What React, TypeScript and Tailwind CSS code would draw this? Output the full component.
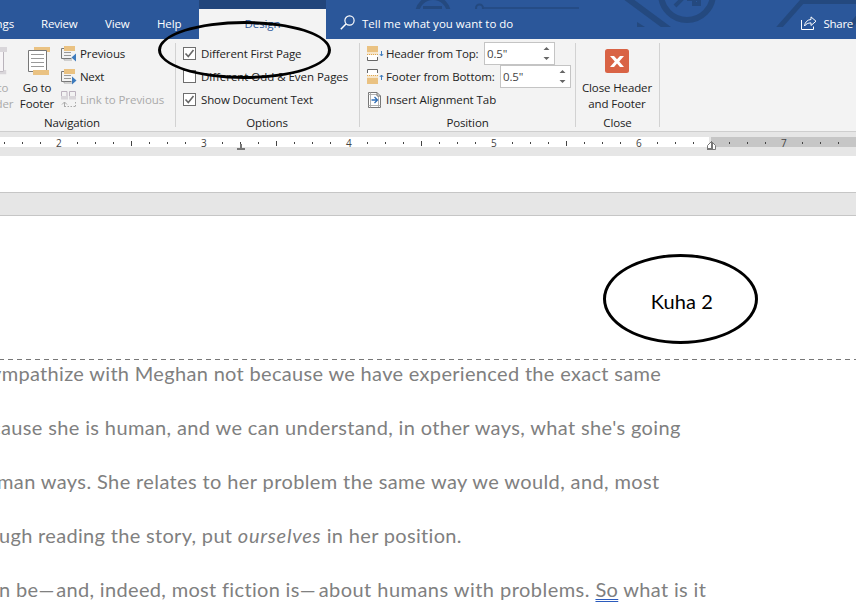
import type { ReactNode } from "react";

const UI = "font-['Open_Sans','Noto_Sans',sans-serif] text-[11.5px] tracking-[-0.12px]";

function HeaderArt() {
  return (
    <svg className="absolute left-0 top-0" width="856" height="39" fill="none" stroke="#24497f">
      <circle cx="433" cy="14" r="16" strokeWidth="4" clipPath="url(#top)" />
      <path d="M423 7.5h19" strokeWidth="3" />
      <clipPath id="top"><rect x="400" y="0" width="80" height="9" /></clipPath>
      <circle cx="479.500" cy="8" r="3.500" strokeWidth="2" clipPath="url(#top2)" />
      <clipPath id="top2"><rect x="470" y="0" width="30" height="9" /></clipPath>
      <path d="M484 8h95" strokeWidth="1.500" />
      <circle cx="687" cy="-6" r="26" strokeWidth="6" />
      <path d="M675 6L690 -9M687 -1h12V4h-5V-3" strokeWidth="4" />
      <path d="M624 -4L670 30" strokeWidth="6" clipPath="url(#band)" />
      <path d="M637 22l8 5h-8z" fill="#24497f" stroke="none" />
      <path d="M776 31L802 1.500h60M846 31L866 8" strokeWidth="5" clipPath="url(#band)" />
      <clipPath id="band"><rect x="600" y="0" width="256" height="27" /></clipPath>
    </svg>
  );
}

function SearchIcon() {
  return (
    <svg width="15" height="15" viewBox="0 0 15 15" fill="none" stroke="#fff" strokeWidth="1.2">
      <circle cx="9.500" cy="5.500" r="4.600" />
      <path d="M6.200 8.800L0.800 14.200" strokeWidth="1.500" />
    </svg>
  );
}

function ShareIcon() {
  return (
    <svg width="16" height="14" viewBox="0 0 16 14" fill="none" stroke="#fff" strokeWidth="1">
      <path d="M0.500 4v9.500h12v-3" />
      <path d="M3.500 10C4 6 6.500 3.700 10 3.500V0.900L15 5.200L10 9.500V6.900C7 6.900 5 8 3.500 10z" strokeLinejoin="round" />
    </svg>
  );
}

function GoToFooterIcon() {
  return (
    <svg width="24" height="30" viewBox="0 0 24 30" fill="none">
      <path d="M6 0h16v5h-4V3H6z" fill="#eac282" />
      <path d="M0.500 3.500h18v21h-18z" fill="#fff" stroke="#777" />
      <path d="M3 7.500h13M3 11.500h13M3 15.500h13M3 19.500h13" stroke="#999" />
      <rect x="5" y="23" width="16" height="5" fill="#eac282" />
    </svg>
  );
}

function GoToHeaderIcon() {
  return (
    <svg width="24" height="30" viewBox="0 0 24 30" fill="none">
      <path d="M0.500 3.500h20v21h-20z" fill="#f7f5f7" stroke="#b9b3bb" />
      <path d="M3 9.500h13M3 13.500h13M3 17.500h13" stroke="#c9c4cb" />
      <rect x="4" y="0" width="20" height="5" fill="#d9d6da" />
      <path d="M15 26h7v-3" stroke="#d9d6da" strokeWidth="2.500" />
    </svg>
  );
}

function StepIcon({ next = false }: { next?: boolean }) {
  return (
    <svg width="16" height="16" viewBox="0 0 16 16" fill="none">
      <path d="M3 2.500H0.500v10h10" stroke="#777" />
      <path d="M3 6.500h7M3 9.500h7" stroke="#999" />
      <path d="M3 12.500v1.500h8" stroke="#999" strokeWidth="0.800" />
      <rect x="3" y="0" width="11" height="5" fill="#eac282" />
      <path d={next ? "M11 7.500v8l4.500-4z" : "M15 7.500v8l-4.500-4z"} fill="#3e7bbd" />
    </svg>
  );
}

function LinkIcon() {
  return (
    <svg width="16" height="17" viewBox="0 0 16 17" fill="none">
      <path d="M0.500 5V0.500h5.500V5M8.500 5V0.500h6V5" stroke="#bdb3bf" />
      <path d="M0 5h7v3.500H0zM8 5h7v3.500H8z" fill="#d9d6da" />
      <path d="M3.500 11v5M1 13.500L3.500 11L6 13.500" stroke="#aaa" />
      <path d="M3.500 15.500h11M14.500 15.500v-5" stroke="#aaa" strokeDasharray="1.500 1.500" />
    </svg>
  );
}

function MarginIcon({ bottom = false }: { bottom?: boolean }) {
  return (
    <svg width="17" height="15" viewBox="0 0 17 15" fill="none">
      <g transform={bottom ? "matrix(1 0 0 -1 0 15)" : undefined}>
        <path d="M0.500 8v6.500h10V8" fill="#fff" />
        <path d="M0.500 11v3.500h10V11" stroke="#666" />
        <rect x="0" y="0" width="11" height="6" fill="#eac282" />
        <rect x="0" y="6" width="11" height="3" fill="#f6e6cc" />
        <path d="M0 8.500h11" stroke="#e0a850" strokeDasharray="1 1" />
      </g>
      <path d={bottom ? "M14.500 11V6M12.800 8l1.700-2l1.700 2" : "M14.500 5v5M12.800 8l1.700 2l1.700-2"} stroke="#3e7bbd" />
    </svg>
  );
}

function AlignTabIcon() {
  return (
    <svg width="13" height="16" viewBox="0 0 13 16" fill="none">
      <path d="M0.500 0.500H9l3.500 3.500v11.500h-12z" fill="#fff" stroke="#777" />
      <path d="M2.500 0.500v15M0.500 2.500h9M0.500 13.500h12M10.500 4v11" stroke="#aaa" strokeWidth="0.900" />
      <path d="M9 0.500V4h3.500" stroke="#777" />
      <path d="M3.500 8h5.500M6.500 5l3 3l-3 3" stroke="#2f6db5" strokeWidth="1.300" />
    </svg>
  );
}

function Divider() {
  return <div className="mt-1 h-[84px] w-px shrink-0 bg-[#d2d2d2]" />;
}

function Group({ label, className, children }: { label: string; className: string; children: ReactNode }) {
  return (
    <section className={`flex shrink-0 flex-col pt-[3px] ${className}`}>
      <div className="h-[72px]">{children}</div>
      <div className="flex h-[17px] items-center justify-center tracking-[-0.12px]">{label}</div>
    </section>
  );
}

function CheckRow({ label, checked = false }: { label: string; checked?: boolean }) {
  return (
    <div className="flex h-[23px] items-center gap-[5px]">
      <span className="h-[13px] w-[13px] border border-[#6e6e6e] bg-white">
        {checked && (
          <svg width="11" height="11" viewBox="0 0 11 11" fill="none">
            <path d="M1.500 5.500L4.300 8.500L9.500 2" stroke="#666" strokeWidth="1.600" />
          </svg>
        )}
      </span>
      <span className={checked ? "" : "tracking-[-0.04px]"}>{label}</span>
    </div>
  );
}

function Spinner() {
  return (
    <div className="flex h-[23px] w-[71px] shrink-0 items-center justify-between border border-[#c4c4c4] bg-white pl-[2px] pr-[4px] text-[#444]">
      <span>0.5"</span>
      <svg width="7" height="15" viewBox="0 0 7 15" fill="#666">
        <path d="M0.500 4L3.500 1L6.500 4zM0.500 11L3.500 14L6.500 11z" />
      </svg>
    </div>
  );
}

function Ruler() {
  return (
    <div className="relative h-[10px] bg-white">
      <div className="absolute right-0 top-0 h-[10px] w-[147px] border-l-2 border-[#e6e6e6] bg-[#c6c6c6]" />
      <div className="relative -ml-[4.5px] flex h-[10px] w-[870px]">
        {Array.from({ length: 48 }, (_, i) => {
          const k = (i + 5) % 8;
          return (
            <span key={i} className="flex w-[18.125px] shrink-0 items-center justify-center">
              {k === 0 ? (
                <span className="pt-px font-['Open_Sans',sans-serif] text-[10px] leading-[10px] text-[#444]">{(i + 13) / 8}</span>
              ) : k === 4 ? (
                <span className="mt-[3px] h-[5px] w-px bg-[#444]" />
              ) : (
                <span className="mt-[2px] h-[2px] w-px bg-[#444]" />
              )}
            </span>
          );
        })}
      </div>
      <svg className="absolute left-[237px] top-[7px]" width="8" height="6" fill="#777">
        <path d="M3 0h2v4h3v2H0V4h3z" />
      </svg>
      <svg className="absolute left-[707px] top-[4px]" width="9" height="9" fill="none">
        <path d="M0.500 8.500V4.500L4.500 0.500L8.500 4.500V8.500z" fill="#fff" stroke="#777" />
        <path d="M5 1v8M0 8h5" stroke="#777" strokeWidth="2" />
      </svg>
    </div>
  );
}

export default function App() {
  return (
    <div className="relative h-[616px] w-[856px] overflow-hidden whitespace-nowrap bg-white">
      <header className={`relative flex h-[39px] bg-[#2b579a] pt-[9px] leading-[29px] text-white ${UI}`}>
        <HeaderArt />
        <nav className="relative flex w-[199px] shrink-0">
          <span className="-ml-[10px] flex w-[24px] justify-end">ings</span>
          <span className="ml-[27px] w-[37px] tracking-[-0.2px]">Review</span>
          <span className="ml-[27px] w-[25px]">View</span>
          <span className="ml-[27px]">Help</span>
        </nav>
        <div className="relative -mt-[9px] w-[127px] shrink-0 border-t-[9px] border-[#22457b] bg-[#f3f3f3] text-center text-[#2b579a]">Design</div>
        <div className="relative ml-[14px] flex gap-[7px]">
          <span className="pt-[6px]"><SearchIcon /></span>
          <span className="tracking-normal">Tell me what you want to do</span>
        </div>
        <div className="relative ml-auto flex gap-[7px] pr-[3px]">
          <span className="pt-[7px]"><ShareIcon /></span>
          <span className="tracking-[-0.3px]">Share</span>
        </div>
      </header>

      <div className={`flex h-[93px] border-b border-[#cecece] bg-[#f3f3f3] leading-[16px] text-[#222] ${UI}`}>
        <Group label="Navigation" className="w-[175px] pr-[31px]">
          <div className="flex">
            <div className="-ml-[26px] flex w-[40px] shrink-0 flex-col items-center pt-[5px] text-[#aaa]">
              <span className="ml-[2px]"><GoToHeaderIcon /></span>
              <span className="mt-[3px]">Go to</span>
              <span>Header</span>
            </div>
            <div className="flex w-[46px] shrink-0 flex-col items-center pt-[5px]">
              <span className="ml-[6px]"><GoToFooterIcon /></span>
              <span className="mt-[3px]">Go to</span>
              <span>Footer</span>
            </div>
            <div className="ml-px">
              <div className="flex h-[23px] items-center gap-[3px]"><StepIcon /><span>Previous</span></div>
              <div className="flex h-[23px] items-center gap-[3px]"><StepIcon next /><span className="tracking-[-0.3px]">Next</span></div>
              <div className="flex h-[23px] items-center gap-[3px] text-[#aaa]"><LinkIcon /><span className="tracking-[-0.06px]">Link to Previous</span></div>
            </div>
          </div>
        </Group>
        <Divider />
        <Group label="Options" className="w-[183px] pl-[7px] pr-[8px]">
          <CheckRow label="Different First Page" checked />
          <CheckRow label="Different Odd & Even Pages" />
          <CheckRow label="Show Document Text" checked />
        </Group>
        <Divider />
        <Group label="Position" className="w-[215px] px-[4px]">
          <div className="flex h-[23px] items-center pl-[3px]">
            <MarginIcon /><span className="ml-[2px] w-[98px] shrink-0 tracking-[-0.16px]">Header from Top:</span><Spinner />
          </div>
          <div className="flex h-[23px] items-center pl-[3px]">
            <MarginIcon bottom /><span className="ml-[2px] w-[114px] shrink-0 tracking-[-0.08px]">Footer from Bottom:</span><Spinner />
          </div>
          <div className="flex h-[23px] items-center pl-[4px]">
            <AlignTabIcon /><span className="ml-[5px] tracking-[-0.06px]">Insert Alignment Tab</span>
          </div>
        </Group>
        <Divider />
        <Group label="Close" className="w-[83px]">
          <div className="-ml-px flex flex-col items-center pt-[7px]">
            <svg width="24" height="24" viewBox="0 0 24 24">
              <rect width="24" height="24" rx="2.500" fill="#d96345" />
              <path d="M5 7h4l3 3.300L15 7h4l-4.800 5.400L19 18h-4l-3-3.500L9 18H5l4.800-5.600z" fill="#fff" />
            </svg>
            <span className="mt-[7px]">Close Header</span>
            <span>and Footer</span>
          </div>
        </Group>
        <Divider />
      </div>

      <div className="h-[24px] bg-[#e6e6e6] pt-[5px]">
        <Ruler />
      </div>
      <div className="h-[36px] bg-white" />
      <div className="h-[24px] border-y border-[#c6c6c6] bg-[#e6e6e6]" />

      <main className="font-['Lato','Carlito',sans-serif] text-[20px] text-[#808080]">
        <div className="flex h-[143px] justify-end pr-[143px] pt-[58px] leading-[54px] tracking-[0.1px] text-black">
          <span>Kuha 2</span>
        </div>
        <svg className="block" width="856" height="1">
          <path d="M-1 0.500H856" stroke="#777" strokeDasharray="5 4" />
        </svg>
        <div className="-mt-[14px] leading-[54px]">
          <p className="-ml-[9px] tracking-[0.32px]">ympathize with Meghan not because we have experienced the exact same</p>
          <p className="-ml-[9px] tracking-[0.37px]">cause she is human, and we can understand, in other ways, what she's going</p>
          <p className="-ml-[3px] tracking-[0.385px]">man ways. She relates to her problem the same way we would, and, most</p>
          <p className="-ml-px tracking-[0.32px]">ugh reading the story, put <em className="tracking-[0.75px]">ourselves</em> in her position.</p>
          <p className="-ml-px tracking-[0.33px]">
            n be<span className="tracking-[2px]">—</span>and, indeed, most fiction is<span className="tracking-[3px]">—</span>
            <span className="tracking-[0.46px]">about humans with problems. </span>
            <span className="underline decoration-[#2b5bbd] decoration-double decoration-1 underline-offset-2">So</span> what is it
          </p>
        </div>
      </main>

      <div className="absolute left-[158px] top-[21px] h-[58px] w-[173px] rounded-[50%] border-[3px] border-black" />
      <div className="absolute left-[603px] top-[254px] h-[90px] w-[155px] rounded-[50%] border-[3px] border-black" />
    </div>
  );
}
